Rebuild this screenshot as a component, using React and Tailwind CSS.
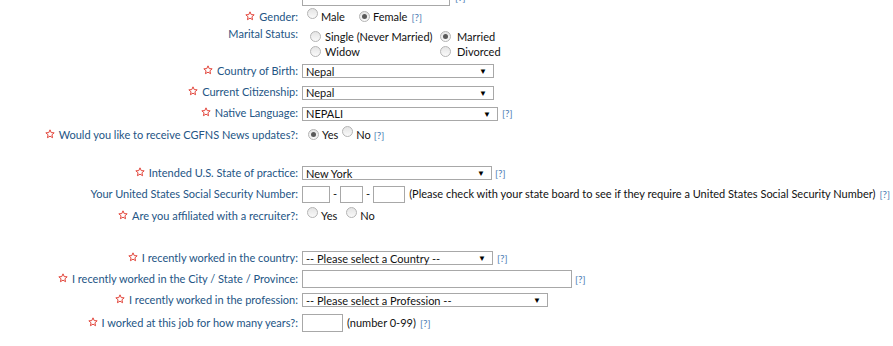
import React from "react";

const font = { fontFamily: "Lato, 'Open Sans', sans-serif" };

const Star = () => (
  <svg width="10" height="10" viewBox="0 0 24 24" className="mr-[4px] shrink-0 -mt-[3px]">
    <path
      d="M12 2l2.9 6.6 7.1.6-5.4 4.7 1.6 7-6.2-3.7-6.2 3.7 1.6-7L2 9.2l7.1-.6z"
      fill="none"
      stroke="#e2463c"
      strokeWidth="2.4"
      strokeLinejoin="round"
    />
  </svg>
);

const Help = ({ className = "" }) => (
  <span className={`text-[10px] text-[#4b7cb3] ${className}`}>[?]</span>
);

const Radio = ({ checked }) => (
  <span className="inline-flex w-[11px] h-[11px] rounded-full border border-[#b4b4b4] bg-gradient-to-b from-[#e4e4e4] to-[#fafafa] items-center justify-center shrink-0">
    {checked && <span className="w-[5px] h-[5px] rounded-full bg-[#5a5a5a]" />}
  </span>
);

const Select = ({ value, w }) => (
  <div className={`${w} h-[14px] border border-[#a8a8a8] bg-white flex items-center justify-between pl-[3px] pr-[6px] text-[11px] text-[#111] leading-none`}>
    <span>{value}</span>
    <span className="text-[8px] text-black">▼</span>
  </div>
);

const Row = ({ h, star, label, children, align = "items-center" }) => (
  <div className={`grid grid-cols-[298px_1fr] gap-x-[4px] ${h} ${align}`}>
    <div className="flex items-center justify-end text-[11px] text-[#245585] whitespace-nowrap">
      {star && <Star />}
      <span>{label}</span>
    </div>
    <div className="flex items-center text-[11px] text-[#111] whitespace-nowrap">{children}</div>
  </div>
);

export default function App() {
  return (
    <div className="w-[893px] h-[346px] overflow-hidden bg-white" style={font}>
      <div className="-mt-[14px]">
        {/* cut off row at the top */}
        <Row h="h-[22px]" label="">
          <div className="w-[148px] h-[18px] border border-[#a8a8a8]" />
          <Help className="ml-[5px]" />
        </Row>

        <Row h="h-[18px]" star label="Gender:">
          <span className="ml-[5px] -mt-[4px]"><Radio /></span>
          <span className="ml-[3px]">Male</span>
          <span className="ml-[14px] -mt-[4px]"><Radio checked /></span>
          <span className="ml-[3px]">Female</span>
          <Help className="ml-[4px]" />
        </Row>

        <Row h="h-[34px]" label="Marital Status:" align="items-start">
          <div className="grid grid-cols-[130px_1fr] ml-[8px] leading-[15px] pt-[3px]">
            <span className="flex items-center gap-[4px]"><Radio />Single (Never Married)</span>
            <span className="flex items-center gap-[6px]"><Radio checked />Married</span>
            <span className="flex items-center gap-[4px]"><Radio />Widow</span>
            <span className="flex items-center gap-[6px]"><Radio />Divorced</span>
          </div>
        </Row>

        <Row h="h-[22px]" star label="Country of Birth:">
          <Select value="Nepal" w="w-[192px]" />
        </Row>
        <Row h="h-[21px]" star label="Current Citizenship:">
          <Select value="Nepal" w="w-[192px]" />
        </Row>
        <Row h="h-[21px]" star label="Native Language:">
          <Select value="NEPALI" w="w-[196px]" />
          <Help className="ml-[4px]" />
        </Row>
        <Row h="h-[22px]" star label="Would you like to receive CGFNS News updates?:">
          <span className="ml-[6px] -mt-[3px]"><Radio checked /></span>
          <span className="ml-[3px]">Yes</span>
          <span className="ml-[4px] -mt-[3px]"><Radio /></span>
          <span className="ml-[3px]">No</span>
          <Help className="ml-[3px]" />
        </Row>

        <div className="h-[16px]" />

        <Row h="h-[22px]" star label="Intended U.S. State of practice:">
          <Select value="New York" w="w-[190px]" />
          <Help className="ml-[3px]" />
        </Row>
        <Row h="h-[20px]" label="Your United States Social Security Number:">
          <div className="w-[28px] h-[17px] border border-[#a8a8a8]" />
          <span className="mx-[3px]">-</span>
          <div className="w-[23px] h-[17px] border border-[#a8a8a8]" />
          <span className="mx-[3px]">-</span>
          <div className="w-[32px] h-[17px] border border-[#a8a8a8]" />
          <span className="ml-[4px]">
            (Please check with your state board to see if they require a United States Social Security Number)
          </span>
          <Help className="ml-[4px]" />
        </Row>
        <Row h="h-[24px]" star label="Are you affiliated with a recruiter?:">
          <span className="ml-[5px] -mt-[3px]"><Radio /></span>
          <span className="ml-[3px]">Yes</span>
          <span className="ml-[9px] -mt-[3px]"><Radio /></span>
          <span className="ml-[3px]">No</span>
        </Row>

        <div className="h-[20px]" />

        <Row h="h-[20px]" star label="I recently worked in the country:">
          <Select value="-- Please select a Country --" w="w-[191px]" />
          <Help className="ml-[4px]" />
        </Row>
        <Row h="h-[22px]" star label="I recently worked in the City / State / Province:">
          <div className="w-[270px] h-[18px] border border-[#a8a8a8]" />
          <Help className="ml-[3px]" />
        </Row>
        <Row h="h-[20px]" star label="I recently worked in the profession:">
          <Select value="-- Please select a Profession --" w="w-[246px]" />
        </Row>
        <Row h="h-[26px]" star label="I worked at this job for how many years?:">
          <div className="w-[41px] h-[18px] border border-[#a8a8a8]" />
          <span className="ml-[4px]">(number 0-99)</span>
          <Help className="ml-[4px]" />
        </Row>
      </div>
    </div>
  );
}
